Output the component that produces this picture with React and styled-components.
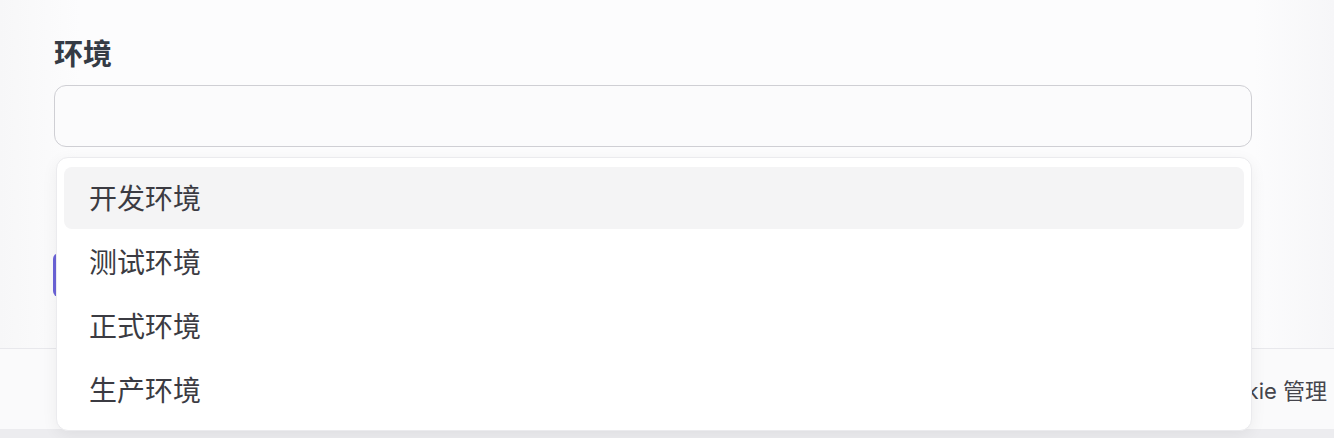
import React from "react";
import styled, { createGlobalStyle } from "styled-components";

const Global = createGlobalStyle`
  html, body { margin: 0; padding: 0; }
  body {
    background: #fafafb;
    font-family: "Inter", "Noto Sans CJK SC", sans-serif;
    color: #3a3a40;
  }
`;

const Page = styled.div`
  width: 1334px;
  height: 438px;
  overflow: hidden;
  display: flex;
  flex-direction: column;
  background: linear-gradient(90deg, #f7f7f8 0%, #fcfcfd 6%, #fcfcfd 94%, #f6f6f8 100%);
`;

const Form = styled.div`
  padding: 32px 82px 0 54px;
  display: flex;
  flex-direction: column;
`;

const Label = styled.div`
  font-family: "Noto Sans CJK SC", sans-serif;
  font-size: 29px;
  font-weight: 600;
  line-height: 40px;
  color: #353b45;
`;

const Field = styled.div`
  position: relative;
  margin-top: 13px;
`;

const Input = styled.div`
  height: 60px;
  border: 1px solid #cfcfd4;
  border-radius: 12px;
  background: #fbfbfc;
`;

const Menu = styled.div`
  position: absolute;
  top: calc(100% + 10px);
  left: 2px;
  right: 0;
  z-index: 10;
  background: #ffffff;
  border: 1px solid #ebebee;
  border-radius: 12px;
  box-shadow: 0 4px 16px rgba(0, 0, 0, 0.06);
  padding: 9px 7px 9px 7px;
  display: flex;
  flex-direction: column;
  gap: 2px;
`;

const Item = styled.div`
  height: 62px;
  display: flex;
  align-items: center;
  padding: 0 0 3px 25px;
  box-sizing: border-box;
  border-radius: 8px;
  background: ${(p) => (p.$active ? "#f4f4f5" : "transparent")};
  font-family: "Noto Sans CJK SC", sans-serif;
  font-size: 28px;
  color: #3b3b42;
`;

const Button = styled.div`
  margin-top: 106px;
  margin-left: -1px;
  width: 160px;
  height: 44px;
  border-radius: 6px;
  background: #6b63d8;
`;

const Footer = styled.div`
  margin-top: 51px;
  height: 80px;
  border-top: 1px solid #e8e8ec;
  display: flex;
  align-items: center;
  justify-content: flex-end;
  padding-right: 7px;
  background: #fafafb;
`;

const FooterLink = styled.span`
  font-family: "Inter", "Noto Sans CJK SC", sans-serif;
  font-size: 22px;
  color: #45454c;
`;

const Strip = styled.div`
  flex: 1;
  background: #ececef;
`;

const options = ["开发环境", "测试环境", "正式环境", "生产环境"];

export default function App() {
  return (
    <>
      <Global />
      <Page>
        <Form>
          <Label>环境</Label>
          <Field>
            <Input />
            <Menu>
              {options.map((o, i) => (
                <Item key={o} $active={i === 0}>
                  {o}
                </Item>
              ))}
            </Menu>
          </Field>
          <Button />
        </Form>
        <Footer>
          <FooterLink>Cookie 管理</FooterLink>
        </Footer>
        <Strip />
      </Page>
    </>
  );
}
